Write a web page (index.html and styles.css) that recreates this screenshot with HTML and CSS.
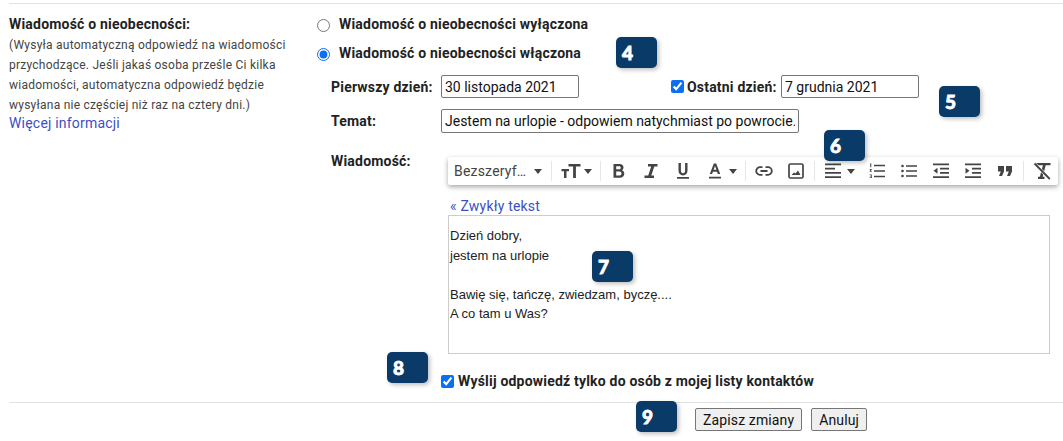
FILE: index.html
```html
<!DOCTYPE html>
<html lang="pl">
<head>
<meta charset="utf-8">
<title>Wiadomość o nieobecności</title>
<link rel="stylesheet" href="styles.css">
</head>
<body>
<main class="page">
  <section class="setting">
    <aside class="intro">
      <h2 class="intro-title">Wiadomość o nieobecności:</h2>
      <p class="intro-text">(Wysyła automatyczną odpowiedź na wiadomości przychodzące. Jeśli jakaś osoba prześle Ci kilka wiadomości, automatyczna odpowiedź będzie wysyłana nie częściej niż raz na cztery dni.)</p>
      <a class="link" href="#">Więcej informacji</a>
    </aside>
    <div class="form">
      <label class="radio-row"><input type="radio" name="v" class="radio"><span>Wiadomość o nieobecności wyłączona</span></label>
      <label class="radio-row second"><input type="radio" name="v" class="radio" checked><span>Wiadomość o nieobecności włączona</span></label>
      <div class="row dates">
        <span class="label">Pierwszy dzień:</span>
        <input class="field date" type="text" value="30 listopada 2021">
        <label class="end-label"><input type="checkbox" class="check" checked><span>Ostatni dzień:</span></label>
        <input class="field date" type="text" value="7 grudnia 2021">
      </div>
      <div class="row subject">
        <span class="label">Temat:</span>
        <input class="field subject-field" type="text" value="Jestem na urlopie - odpowiem natychmiast po powrocie.">
      </div>
      <div class="row message">
        <span class="label msg-label">Wiadomość:</span>
        <div class="composer">
          <div class="toolbar">
            <span class="tool font-tool">Bezszeryf…<i class="caret"></i></span>
            <span class="sep"></span>
            <span class="tool size-tool">
              <svg width="20" height="18" viewBox="0 0 20 18"><path d="M7.500 2h12v2.600h-4.600V16h-2.800V4.600H7.500zM.5 7h7.500v2.200H5.500V16H3V9.200H.5z" fill="#444"/></svg><i class="caret"></i>
            </span>
            <span class="sep"></span>
            <span class="tool icon"><svg width="16" height="16" viewBox="0 0 16 16"><path d="M2.500 1h6c2.500 0 4 1.400 4 3.500 0 1.200-.6 2.200-1.500 2.800 1.400.5 2.300 1.700 2.300 3.200 0 2.400-1.700 4.300-4.400 4.300H2.500zM5.200 3.300v3h3c1 0 1.600-.6 1.600-1.500s-.6-1.500-1.600-1.500zM5.200 8.600v3.900h3.300c1.200 0 2-.8 2-1.950s-.8-1.950-2-1.950z" fill="#444"/></svg></span>
            <span class="tool icon"><svg width="16" height="16" viewBox="0 0 16 16"><path d="M5 1h9.500v2.400h-3.200L8.300 12.600h2.700V15H1.500v-2.400h3.700l3-9.200H5z" fill="#444"/></svg></span>
            <span class="tool icon"><svg width="16" height="16" viewBox="0 0 16 16"><path d="M3.500 0h2.400v7.500c0 1.700.8 2.700 2.100 2.700s2.100-1 2.100-2.700V0h2.400v7.600c0 3-1.800 4.800-4.500 4.800s-4.500-1.800-4.500-4.800zM2 14h12v1.800H2z" fill="#444"/></svg></span>
            <span class="tool color-tool"><svg width="16" height="16" viewBox="0 0 16 16"><path d="M6.800 .5h2.400l4 10.500h-2.400l-.8-2.300H5.900L5.100 11H2.800zM6.600 6.700h2.800L8 3zM2 13.800h12v1.800H2z" fill="#444"/></svg><i class="caret"></i></span>
            <span class="sep"></span>
            <span class="tool icon"><svg width="18" height="18" viewBox="0 0 18 18"><path d="M7.500 5.200H5a3.800 3.800 0 0 0 0 7.600h2.500M10.500 5.200H13a3.800 3.800 0 0 1 0 7.600h-2.500M5.500 9h7" fill="none" stroke="#444" stroke-width="1.800"/></svg></span>
            <span class="tool icon"><svg width="16" height="16" viewBox="0 0 16 16"><rect x="1" y="1" width="14" height="14" rx="1.500" fill="none" stroke="#444" stroke-width="1.700"/><path d="M3.500 12l2.500-2.600 1.500 1.200 2.500-3.200 2.500 4.600z" fill="#444"/></svg></span>
            <span class="sep after-icons"></span>
            <span class="tool align-tool"><svg width="16" height="16" viewBox="0 0 16 16"><path d="M0 .5h16v1.700H0zM0 4.700h10v1.700H0zM0 9h16v1.700H0zM0 13.300h16V15H0z" fill="#444"/></svg><i class="caret"></i></span>
            <span class="tool icon"><svg width="16" height="16" viewBox="0 0 16 16"><path d="M5 1.700h11v1.600H5zM5 7.200h11v1.600H5zM5 12.700h11v1.600H5z" fill="#444"/><path d="M1 .5h1.300v3.700H1.300V1.400H1zM.6 6h2.200v.8L1.700 8h1.100v.8H.6V8l1.100-1.200H.6zM.6 11.500h2.200v3.500H.6v-.8h1.300v-.6H1.200v-.6h.7v-.7H.6z" fill="#444"/></svg></span>
            <span class="tool icon"><svg width="16" height="16" viewBox="0 0 16 16"><path d="M5 2.200h11v1.600H5zM5 7.200h11v1.600H5zM5 12.200h11v1.600H5z" fill="#444"/><circle cx="1.500" cy="3" r="1.300" fill="#444"/><circle cx="1.500" cy="8" r="1.300" fill="#444"/><circle cx="1.500" cy="13" r="1.300" fill="#444"/></svg></span>
            <span class="tool icon"><svg width="16" height="16" viewBox="0 0 16 16"><path d="M0 .5h16v1.700H0zM7 4.700h9v1.700H7zM7 9h9v1.700H7zM0 13.300h16V15H0zM4.500 4.800v5.900L.5 7.700z" fill="#444"/></svg></span>
            <span class="tool icon"><svg width="16" height="16" viewBox="0 0 16 16"><path d="M0 .5h16v1.700H0zM7 4.700h9v1.700H7zM7 9h9v1.700H7zM0 13.300h16V15H0zM.5 4.800v5.900l4-3z" fill="#444"/></svg></span>
            <span class="tool icon"><svg width="16" height="16" viewBox="0 0 16 16"><path d="M1 3h6v5.500L5 13H2l1.800-4.500H1zM9 3h6v5.500L13 13h-3l1.800-4.500H9z" fill="#444"/></svg></span>
            <span class="sep after-icons"></span>
            <span class="tool icon"><svg width="18" height="18" viewBox="0 0 18 18"><path d="M2.500 1h15v2.200h-15zM10 3h2.800L9.600 15H6.800zM5 14.800h6.500V17H5z" fill="#444"/><path d="M1.500 1.500L16.800 17" stroke="#fff" stroke-width="3"/><path d="M1.500 1.500L16.800 17" stroke="#444" stroke-width="1.800"/></svg></span>
          </div>
          <a class="link plain" href="#">« Zwykły tekst</a>
          <div class="editor">
            <div>Dzień dobry,</div>
            <div>jestem na urlopie</div>
            <div><br></div>
            <div>Bawię się, tańczę, zwiedzam, byczę....</div>
            <div>A co tam u Was?</div>
          </div>
        </div>
      </div>
      <label class="contacts"><input type="checkbox" class="check" checked><span>Wyślij odpowiedź tylko do osób z mojej listy kontaktów</span></label>
    </div>
  </section>
  <footer class="actions">
    <button class="btn" type="button">Zapisz zmiany</button>
    <button class="btn" type="button">Anuluj</button>
  </footer>
</main>
<span class="badge b4">4</span>
<span class="badge b5">5</span>
<span class="badge b6">6</span>
<span class="badge b7">7</span>
<span class="badge b8">8</span>
<span class="badge b9">9</span>
</body>
</html>
```

FILE: styles.css
```css
* { box-sizing: border-box; }
html, body { margin: 0; padding: 0; }
body {
  width: 1063px;
  height: 441px;
  overflow: hidden;
  background: #fff;
  color: #222;
  font-family: Roboto, "Liberation Sans", sans-serif;
  font-size: 14px;
  letter-spacing: .2px;
  position: relative;
}
.page { padding: 3px 0 0 9px; }
.setting {
  display: grid;
  grid-template-columns: 308px 1fr;
  border-top: 1px solid #e2e2e2;
  border-bottom: 1px solid #e2e2e2;
  height: 400px;
}
.intro { padding-top: 11px; }
.intro-title { margin: 0; font-size: 14px; line-height: 18px; font-weight: 700; color: #222; }
.intro-text { margin: 2px 0 0; width: 290px; font-size: 12px; letter-spacing: .24px; line-height: 20px; color: #444; }
.link { color: #3c4fc4; text-decoration: none; }
.intro .link { display: block; line-height: 18px; margin-top: -1px; }
.form { display: flex; flex-direction: column; }
.radio-row {
  display: flex;
  align-items: center;
  height: 18px;
  margin-top: 11px;
  font-weight: 700;
  color: #222;
}
.radio { width: 13px; height: 13px; margin: 2px 9px 0 0; accent-color: #0b6ef5; }
.row { display: flex; margin-left: 14px; }
.label { width: 110px; font-weight: 700; color: #222; flex: none; }
.dates { margin-top: 13px; height: 23px; align-items: center; }
.field {
  height: 23px;
  padding: 1px 3px;
  border: 1px solid #767676;
  border-radius: 2px;
  font: 14px Roboto, "Liberation Sans", sans-serif;
  letter-spacing: 0;
  color: #111;
  background: #fff;
}
.date { width: 138px; }
.end-label {
  display: flex;
  align-items: center;
  margin-left: 92px;
  width: 110px;
  font-weight: 700;
  color: #222;
}
.check { width: 13px; height: 13px; margin: 0 3px 0 0; accent-color: #0b6ef5; }
.subject { margin-top: 11px; height: 24px; align-items: center; }
.subject-field { width: 358px; height: 24px; }
.message { margin-top: 12px; }
.msg-label { padding-top: 7px; line-height: 18px; }
.composer { margin-left: 7px; width: 610px; }
.toolbar {
  display: flex;
  align-items: center;
  height: 28px;
  margin-top: 12px;
  background: #fff;
  border-radius: 2px;
  box-shadow: 0 2px 5px rgba(0,0,0,.35);
}
.tool { display: flex; align-items: center; flex: none; color: #444; }
.icon { width: 32px; justify-content: center; }
.sep + .icon { margin-left: 2px; }
.font-tool { width: 103px; padding-left: 6px; font-size: 14px; color: #444; }
.font-tool .caret { margin-left: 8px; }
.size-tool { width: 48px; padding-left: 9px; gap: 3px; }
.color-tool { width: 46px; padding-left: 8px; gap: 6px; }
.align-tool { width: 46px; padding-left: 10px; gap: 6px; }
.caret {
  display: inline-block;
  width: 0;
  height: 0;
  border-left: 4.500px solid transparent;
  border-right: 4.500px solid transparent;
  border-top: 5px solid #444;
}
.sep { width: 1px; height: 20px; background: #e6e6e6; flex: none; }
.after-icons { margin-left: 2px; }
.plain { display: block; margin: 12px 0 0 2px; line-height: 18px; font-size: 14px; }
.editor {
  width: 602px;
  height: 139px;
  padding: 10px 1px;
  border: 1px solid #ccc;
  font-family: "Liberation Sans", Arial, sans-serif;
  font-size: 13px;
  letter-spacing: 0;
  line-height: 19.500px;
  color: #222;
}
.contacts {
  display: flex;
  align-items: center;
  margin: 18px 0 0 124px;
  height: 18px;
  font-weight: 700;
  color: #222;
}
.contacts .check { margin-right: 4px; }
.actions {
  display: flex;
  gap: 9px;
  padding: 5px 0 0 686px;
}
.btn {
  height: 23px;
  padding: 0 7px;
  border: 1px solid #767676;
  border-radius: 2px;
  background: #efefef;
  color: #111;
  font: 14px Roboto, "Liberation Sans", sans-serif;
  letter-spacing: .13px;
}
.badge {
  position: absolute;
  width: 41px;
  height: 31px;
  padding-left: 6px;
  border-radius: 5px;
  background: #0a3a67;
  box-shadow: 2px 2px 4px rgba(0,0,0,.25);
  color: #fff;
  font-family: Lato, Inter, sans-serif;
  font-weight: 900;
  font-size: 19px;
  line-height: 31px;
  -webkit-text-stroke: .8px #fff;
}
.b4 { left: 616px; top: 37px; }
.b5 { left: 939px; top: 86px; }
.b6 { left: 824px; top: 130px; }
.b7 { left: 592px; top: 251px; }
.b8 { left: 387px; top: 352px; }
.b9 { left: 636px; top: 401px; }
```
